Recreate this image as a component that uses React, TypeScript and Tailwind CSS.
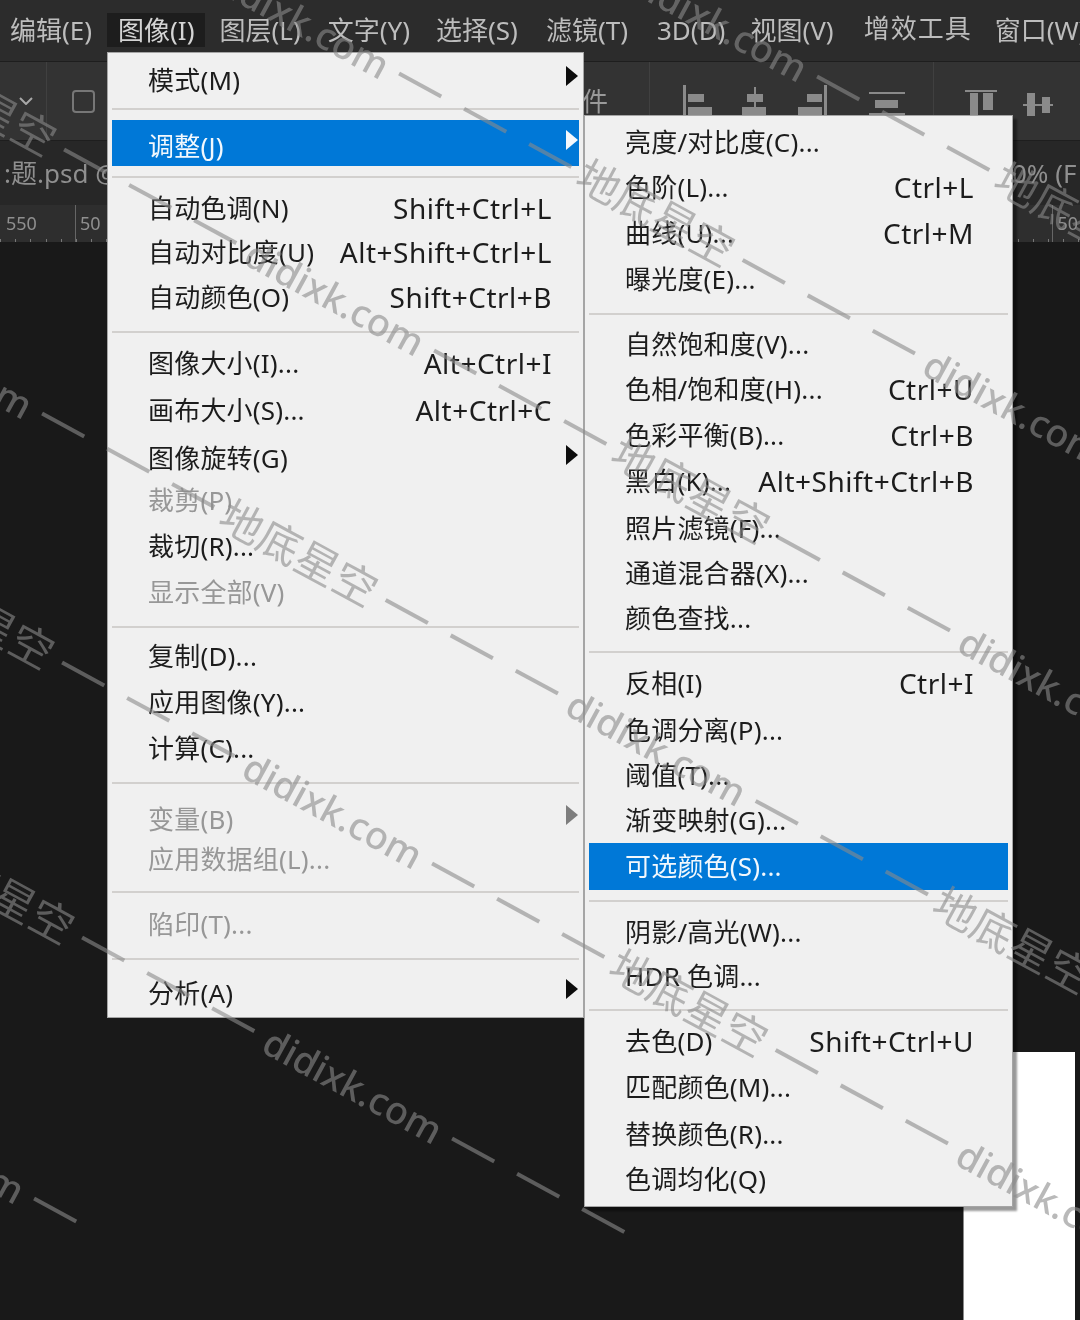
const MENU_BAR = [
  { label: "编辑(E)", cls: "ml-[10px]" },
  { label: "图像(I)", cls: "ml-[15px] px-[11px] h-[34px] bg-[#1d1d1d] text-[#d4d4d4]" },
  { label: "图层(L)", cls: "ml-[14px]" },
  { label: "文字(Y)", cls: "ml-[27px]" },
  { label: "选择(S)", cls: "ml-[26px]" },
  { label: "滤镜(T)", cls: "ml-[28px]" },
  { label: "3D(D)", cls: "ml-[29px]" },
  { label: "视图(V)", cls: "ml-[25px]" },
  { label: "增效工具", cls: "ml-[30px] -mt-[3px] tracking-[1px]" },
  { label: "窗口(W)", cls: "ml-[23px]" },
];

type Row = {
  label?: string;
  shortcut?: string;
  h: string; // row height (and text nudge) as tailwind classes
  sub?: boolean;
  off?: boolean;
  on?: boolean;
};

const IMAGE_MENU: Row[] = [
  { label: "模式(M)", h: "h-[48px]", sub: true },
  { h: "h-[14px] pt-[2px]" },
  { label: "调整(J)", h: "h-[46px] pt-[10px]", sub: true, on: true },
  { h: "h-[22px] pt-[10px]" },
  { label: "自动色调(N)", shortcut: "Shift+Ctrl+L", h: "h-[44px]" },
  { label: "自动对比度(U)", shortcut: "Alt+Shift+Ctrl+L", h: "h-[44px]" },
  { label: "自动颜色(O)", shortcut: "Shift+Ctrl+B", h: "h-[46px]" },
  { h: "h-[21px] pt-[9px]" },
  { label: "图像大小(I)...", shortcut: "Alt+Ctrl+I", h: "h-[44px]" },
  { label: "画布大小(S)...", shortcut: "Alt+Ctrl+C", h: "h-[50px]" },
  { label: "图像旋转(G)", h: "h-[46px]", sub: true },
  { label: "裁剪(P)", h: "h-[38px]", off: true },
  { label: "裁切(R)...", h: "h-[54px]" },
  { label: "显示全部(V)", h: "h-[38px]", off: true },
  { h: "h-[24px] pt-[13px]" },
  { label: "复制(D)...", h: "h-[42px]" },
  { label: "应用图像(Y)...", h: "h-[50px]" },
  { label: "计算(C)...", h: "h-[42px]" },
  { h: "h-[26px] pt-[11px]" },
  { label: "变量(B)", h: "h-[48px]", sub: true, off: true },
  { label: "应用数据组(L)...", h: "h-[32px]", off: true },
  { h: "h-[28px] pt-[14px]" },
  { label: "陷印(T)...", h: "h-[42px]", off: true },
  { h: "h-[24px] pt-[11px]" },
  { label: "分析(A)", h: "h-[48px]", sub: true },
];

const ADJUST_MENU: Row[] = [
  { label: "亮度/对比度(C)...", h: "h-[44px]" },
  { label: "色阶(L)...", shortcut: "Ctrl+L", h: "h-[46px]" },
  { label: "曲线(U)...", shortcut: "Ctrl+M", h: "h-[46px]" },
  { label: "曝光度(E)...", h: "h-[46px]" },
  { h: "h-[20px] pt-[9px]" },
  { label: "自然饱和度(V)...", h: "h-[44px]" },
  { label: "色相/饱和度(H)...", shortcut: "Ctrl+U", h: "h-[46px]" },
  { label: "色彩平衡(B)...", shortcut: "Ctrl+B", h: "h-[46px]" },
  { label: "黑白(K)...", shortcut: "Alt+Shift+Ctrl+B", h: "h-[46px]" },
  { label: "照片滤镜(F)...", h: "h-[48px]" },
  { label: "通道混合器(X)...", h: "h-[42px]" },
  { label: "颜色查找...", h: "h-[48px]" },
  { h: "h-[18px] pt-[7px]" },
  { label: "反相(I)", shortcut: "Ctrl+I", h: "h-[46px]" },
  { label: "色调分离(P)...", h: "h-[48px]" },
  { label: "阈值(T)...", h: "h-[42px]" },
  { label: "渐变映射(G)...", h: "h-[45px] pt-[3px]" },
  { label: "可选颜色(S)...", h: "h-[47px] pt-[3px]", on: true },
  { h: "h-[22px] pt-[10px]" },
  { label: "阴影/高光(W)...", h: "h-[44px]" },
  { label: "HDR 色调...", h: "h-[44px]" },
  { h: "h-[21px] pt-[9px]" },
  { label: "去色(D)", shortcut: "Shift+Ctrl+U", h: "h-[44px]" },
  { label: "匹配颜色(M)...", h: "h-[48px]" },
  { label: "替换颜色(R)...", h: "h-[46px]" },
  { label: "色调均化(Q)", h: "h-[44px]" },
];

function MenuRow({ row, inset }: { row: Row; inset: string }) {
  // rows without a label are separators
  if (!row.label) {
    return (
      <div className={row.h}>
        <div className="h-[2px] bg-[#d2d0ce]" />
      </div>
    );
  }
  const color = row.on ? "bg-[#0078d7] text-[#f2f8fd]" : row.off ? "text-[#979797]" : "text-[#1c1c1c]";
  const arrow = row.on ? "#f4f8fc" : row.off ? "#7d7d7d" : "#0c0c0c";
  return (
    <div className={`relative flex items-center justify-between pl-[36px] ${inset} ${row.h} ${color}`}>
      <span className="-mt-[4px] tracking-[0.2px]">{row.label}</span>
      {row.shortcut && <span className="-mt-[4px] text-[28px] tracking-[0.5px]">{row.shortcut}</span>}
      {row.sub && (
        <svg className={`absolute right-[1px] ${row.on ? "top-[10px]" : "top-[8px]"}`} width="12" height="20" viewBox="0 0 12 20">
          <path d="M0 0L12 10L0 20Z" fill={arrow} />
        </svg>
      )}
    </div>
  );
}

function AlignIcons() {
  // alignment buttons in the options bar, coordinates are from x=660 y=80
  return (
    <svg width="400" height="40" viewBox="0 0 400 40" fill="#8a8a8a">
      <rect x="23" y="5" width="3" height="35" />
      <rect x="28" y="14" width="16" height="8" />
      <rect x="28" y="27" width="24" height="9" />
      <rect x="94" y="7" width="2" height="33" />
      <rect x="87" y="14" width="16" height="8" />
      <rect x="82" y="27" width="24" height="9" />
      <rect x="164" y="5" width="3" height="35" />
      <rect x="147" y="14" width="15" height="8" />
      <rect x="138" y="27" width="24" height="9" />
      <rect x="209" y="12" width="36" height="2" />
      <rect x="215" y="20" width="23" height="8" />
      <rect x="209" y="33" width="36" height="3" />
      <rect x="305" y="10" width="32" height="2" />
      <rect x="310" y="13" width="8" height="22" />
      <rect x="323" y="13" width="10" height="17" />
      <rect x="363" y="24" width="30" height="2" />
      <rect x="367" y="13" width="8" height="23" />
      <rect x="382" y="17" width="8" height="16" />
    </svg>
  );
}

function Dash() {
  return <div className="h-[4px] w-[48px] bg-[#8a8a8a]/60" />;
}

function Dashes() {
  return (
    <div className="flex items-center gap-[26px] mx-[10px]">
      <Dash />
      <Dash />
      <Dash />
    </div>
  );
}

function Cn() {
  return <span className="text-[43px] w-[175px]">地底星空</span>;
}

function Site() {
  return <span className="text-[38px] font-medium w-[205px] pl-[4px]">didixk.com</span>;
}

function Period() {
  return (
    <>
      <Cn />
      <Dashes />
      <Site />
      <Dashes />
    </>
  );
}

function Watermark({ cls, children }: { cls: string; children: React.ReactNode }) {
  return (
    <div className={`absolute origin-top-left rotate-[28.5deg] flex items-center whitespace-nowrap leading-none text-[#8a8a8a]/60 ${cls}`}>
      {children}
    </div>
  );
}

export default function App() {
  const ticks = Array.from({ length: 72 });
  return (
    <div className="relative w-[1080px] h-[1320px] overflow-hidden flex flex-col bg-[#191919] blur-[0.4px] font-['Noto_Sans','Noto_Sans_CJK_SC',sans-serif] text-[26px]">
      {/* menu bar */}
      <div className="h-[62px] shrink-0 flex items-center whitespace-nowrap bg-[#2c2c2c] text-[#bdbdbd] pb-[1px] border-b border-[#1e1e1e]">
        {MENU_BAR.map((m) => (
          <span key={m.label} className={`flex items-center ${m.cls}`}>{m.label}</span>
        ))}
      </div>

      {/* options bar */}
      <div className="relative h-[78px] shrink-0 flex items-center bg-[#333333] text-[#9a9a9a]">
        <svg className="ml-[19px]" width="14" height="8" viewBox="0 0 14 8" fill="none" stroke="#a8a8a8" strokeWidth="2">
          <path d="M1 1L7 7L13 1" />
        </svg>
        <div className="ml-[13px] h-[78px] w-px bg-[#404040]" />
        <div className="ml-[25px] w-[23px] h-[23px] rounded-[4px] border-2 border-[#777777]" />
        <span className="ml-[487px]">件</span>
        <div className="ml-[41px] h-[78px] w-px bg-[#404040]" />
        <div className="absolute left-[660px] top-[18px]">
          <AlignIcons />
        </div>
        <div className="absolute left-[933px] top-0 h-[78px] w-px bg-[#404040]" />
      </div>

      {/* document tab */}
      <div className="h-[65px] shrink-0 flex items-center justify-between pl-[4px] bg-[#272727] text-[#8f8f8f] whitespace-nowrap border-t border-[#1e1e1e]">
        <span>:题.psd @</span>
        <span className="w-[68px] overflow-hidden">0% (F</span>
      </div>

      {/* ruler */}
      <div className="relative h-[37px] shrink-0 flex items-center bg-[#2e2e2e] text-[#8f8f8f] text-[18px]">
        <span className="ml-[6px]">550</span>
        <div className="ml-[38px] h-full w-px bg-[#666666]" />
        <span className="ml-[4px]">50</span>
        <div className="ml-[952px] h-full w-px bg-[#666666]" />
        <span className="ml-[4px]">50</span>
        <div className="absolute bottom-0 inset-x-0 flex justify-between h-[3px]">
          {ticks.map((_, i) => (
            <div key={i} className="w-px bg-[#777777]" />
          ))}
        </div>
      </div>

      {/* canvas, the white page shows past the submenu corner */}
      <div className="flex-1 flex justify-end pt-[810px] pr-[5px]">
        <div className="w-[112px] bg-white border-l border-[#8a8a8a]" />
      </div>

      {/* image menu */}
      <div className="absolute left-[107px] top-[52px] w-[477px] h-[966px] px-[4px] pt-[5px] bg-[#f0f0f0] border border-[#a5a5a5] whitespace-nowrap">
        {IMAGE_MENU.map((row, i) => (
          <MenuRow key={i} row={row} inset="pr-[27px]" />
        ))}
      </div>

      {/* adjustments submenu */}
      <div className="absolute left-[584px] top-[115px] w-[429px] h-[1092px] px-[4px] pt-[6px] bg-[#f0f0f0] border border-[#a5a5a5] shadow-[4px_4px_2px_rgba(0,0,0,0.4)] whitespace-nowrap">
        {ADJUST_MENU.map((row, i) => (
          <MenuRow key={i} row={row} inset="pr-[34px]" />
        ))}
      </div>

      {/* watermark over the whole shot */}
      <Watermark cls="left-[295px] top-[-232px]"><Period /><Period /></Watermark>
      <Watermark cls="left-[-123px] top-[-235px]"><Period /><Period /></Watermark>
      <Watermark cls="left-[-88px] top-[42px]"><Period /><Period /></Watermark>
      <Watermark cls="left-[-480px] top-[105px]"><Period /><Period /><Period /></Watermark>
      <Watermark cls="left-[-90px] top-[555px]"><Period /><Period /></Watermark>
      <Watermark cls="left-[-70px] top-[830px]"><Period /></Watermark>
      <Watermark cls="left-[-488px] top-[890px]"><Cn /><Dashes /><Site /><div className="mx-[10px]"><Dash /></div></Watermark>
    </div>
  );
}
